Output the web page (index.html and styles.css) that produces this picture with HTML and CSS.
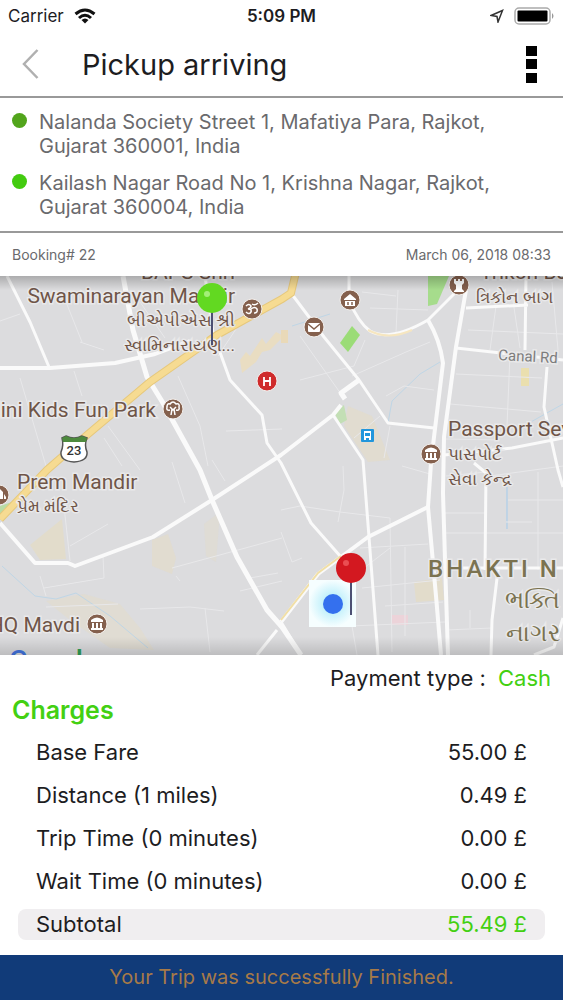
FILE: index.html
```html
<!DOCTYPE html>
<html lang="en">

<head>
    <meta charset="UTF-8">
    <meta name="viewport" content="width=device-width, initial-scale=1.0">
    <title>Pickup arriving</title>
    <link rel="stylesheet" href="styles.css">
</head>

<body>
    <div class="status-bar">
        <div class="status-left">
            <span>Carrier</span>
            <svg width="22" height="16" viewBox="0 0 22 16" aria-hidden="true">
                <g fill="none" stroke="#111" stroke-width="3">
                    <path d="M1.5 6 Q11 -2 20.5 6" />
                    <path d="M5 10 Q11 4.500 17 10" />
                </g>
                <path d="M7.500 12 Q11 9 14.500 12 L11 15.500 Z" fill="#111" />
            </svg>
        </div>
        <span class="status-time">5:09 PM</span>
        <div class="status-right">
            <svg width="14" height="14" viewBox="0 0 14 14" aria-hidden="true">
                <path d="M1 6.500 L12.500 1.500 L8 13 L7 7.500 Z" fill="none" stroke="#333" stroke-width="1.500" />
            </svg>
            <svg width="41" height="18" viewBox="0 0 41 18" aria-hidden="true">
                <rect x="1" y="1" width="35" height="16" rx="4" fill="#fff" stroke="#aaa" stroke-width="1.500" />
                <rect x="3.500" y="3.500" width="30" height="11" rx="1" fill="#000" />
                <path d="M38 6 Q41 9 38 12 Z" fill="#999" />
            </svg>
        </div>
    </div>

    <header class="header">
        <button class="icon-btn" type="button" aria-label="Back">
            <svg width="18" height="32" viewBox="0 0 18 32">
                <path d="M15.500 2 L2 16 L15.500 30" fill="none" stroke="#b0b0b0" stroke-width="2.500" />
            </svg>
        </button>
        <h1 class="title">Pickup arriving</h1>
        <button class="icon-btn" type="button" aria-label="Menu">
            <svg width="11" height="38" viewBox="0 0 11 38">
                <rect width="11" height="10" y="1" />
                <rect width="11" height="10" y="14" />
                <rect width="11" height="10" y="28" />
            </svg>
        </button>
    </header>

    <ul class="addresses">
        <li class="address from">Nalanda Society Street 1, Mafatiya Para, Rajkot, Gujarat 360001, India</li>
        <li class="address to">Kailash Nagar Road No 1, Krishna Nagar, Rajkot, Gujarat 360004, India</li>
    </ul>

    <div class="booking">
        <span>Booking# 22</span>
        <span>March 06, 2018 08:33</span>
    </div>

    <div class="map">
        <svg class="map-canvas" viewBox="0 0 563 379" preserveAspectRatio="xMidYMid slice" role="img" aria-label="Map of the trip">
            <defs>
                <linearGradient id="shadeTop" x1="0" y1="0" x2="0" y2="1">
                    <stop offset="0" stop-color="#000" stop-opacity=".22" />
                    <stop offset="1" stop-color="#000" stop-opacity="0" />
                </linearGradient>
                <linearGradient id="shadeBottom" x1="0" y1="1" x2="0" y2="0">
                    <stop offset="0" stop-color="#000" stop-opacity=".14" />
                    <stop offset="1" stop-color="#000" stop-opacity="0" />
                </linearGradient>
                <radialGradient id="glow">
                    <stop offset="0.400" stop-color="#c4f1fb" />
                    <stop offset="1" stop-color="#f6feff" />
                </radialGradient>
            </defs>
            <rect width="563" height="379" fill="#dcdcde" />

            <!-- built-up areas -->
            <g fill="#e2dccb">
                <path d="M30 269 L62 243 L66 283 L40 284 Z" />
                <path d="M152 264 L168 258 L176 282 L172 298 L152 290 Z" opacity=".7" />
                <path d="M46 325 L84 318 L120 328 L140 352 L154 374 L110 372 L70 344 Z" opacity=".6" />
                <path d="M204 248 L220 236 L216 286 L206 280 Z" opacity=".5" />
                <path d="M348 130 L372 140 L390 184 L368 186 L344 150 Z" opacity=".7" />
                <path d="M414 306 L442 302 L444 324 L416 326 Z" />
                <path d="M521 92 h8 v18 h-8 Z" fill="#eadfae" />
                <path d="M240 84 L246 76 L250 80 L262 62 L266 68 L276 56 L284 60 L270 74 L262 76 L256 86 L242 97 Z" fill="#e9ddc2" />
                <path d="M281 54 h7 v13 h-7 Z" fill="#e9d9b8" />
            </g>
            <path d="M428 0 H449 L437 28 L428 30 Z" fill="#a6dc8c" />
            <path d="M352 50 L360 59 L348 76 L340 67 Z" fill="#9bdc77" />
            <path d="M334 136 L344 129 L347 144 L340 148 Z" fill="#c3dfb5" />
            <path d="M0 230 L18 224 L8 237 L0 238 Z" fill="#b9dca5" />
            <path d="M391 339 L408 339 L408 349 L391 349 Z" fill="#ecd3d9" />

            <!-- water -->
            <g fill="none" stroke="#bfd6e6" stroke-width="1">
                <path d="M388 147 L392 125 L420 98 L440 86" />
                <path d="M520 152 L563 128" />
                <path d="M507 211 V253" stroke="#a3cbec" />
                <path d="M2 290 L35 320 L56 323 L76 317 L110 340 L148 372" />
                <path d="M292 50 L330 38" />
            </g>

            <!-- side streets -->
            <g fill="none" stroke="#e8e8ea" stroke-width="1">
                <path d="M62 16 L82 66 M0 45 L20 38 M80 66 L104 74 M74 95 L82 120 M20 102 L46 190 M104 162 L122 190 M108 150 L140 194 M178 100 L200 150 L208 190" />
                <path d="M140 26 L165 62 M238 50 L218 80 M226 155 L282 153 M212 184 L225 205 M172 186 L185 227 M80 14 L110 28 M64 230 L70 285 M70 270 L108 248" />
                <path d="M40 300 L46 320 M44 312 L104 302 L103 280 M140 333 L190 331 L224 335 M205 332 L210 376 M172 292 L282 262 M176 300 L180 305 M240 315 L282 305 M250 302 L278 297 M46 331 L118 328" />
                <path d="M398 14 L396 56 M300 60 L341 118 M300 104 L354 90 L365 64 M352 100 L406 76 L430 66 M386 120 L404 110 L434 114 M380 140 L354 162 M362 16 L396 20 M370 32 L428 34" />
                <path d="M468 54 L563 58 M496 30 L490 74 M512 18 L520 72 M552 6 L558 74 M510 78 L507 150 M450 128 L541 136 M456 98 L542 102 M446 163 L500 164 M390 150 L384 182" />
                <path d="M343 190 L344 214 L338 246 M281 234 L300 230 L340 236 L390 242 L392 376 M405 271 V360 M360 272 L428 268 M362 312 L440 304 M385 330 L443 326 M350 350 L445 346" />
                <path d="M445 237 H485 M446 257 H563 M506 246 H532 M508 224 H563 M538 196 V294 M446 354 L492 352 M470 334 V352 M352 350 L357 379 M364 292 L390 272" />
                <path d="M281 256 L292 286 L302 282 M402 190 L430 198 M446 200 L486 196 M490 200 L563 190" />
            </g>

            <!-- main streets -->
            <g fill="none" stroke="#fafafa" stroke-width="3" stroke-linejoin="round">
                <path d="M0 92 L50 92 L115 87 L155 78 L190 65" stroke-width="4" />
                <path d="M7 0 L30 46 L49 91" />
                <path d="M123 0 L133 54 L147 101 L163 127 L200 194 L212 224 L237 281 L267 334 L282 351 L301 379" stroke-width="5" />
                <path d="M277 354 L257 379" />
                <path d="M205 0 L213 57 L230 104 L262 139 L267 167 L281 187 L311 247 L341 281" />
                <path d="M0 247 L35 287 L68 287 L75 290 L153 261 L212 224 L281 179 L333 139 L341 129" stroke-width="4" />
                <path d="M333 139 L363 184 L369 261 L378 379" />
                <path d="M291 17 L324 61 L359 104 L388 147 L434 152" />
                <path d="M359 104 L341 117 L345 123" stroke-width="5" />
                <path d="M349 0 L349 24 Q358 46 370 55 Q390 66 428 44 L458 14" />
                <path d="M428 44 Q440 64 443 87 L434 161 L431 187 L428 231 L436 320 L441 379" stroke-width="4" />
                <path d="M466 14 L456 71 L444 161 L443 217 L446 317 L448 379" stroke-width="4" />
                <path d="M466 32 L528 29 M526 0 L525 74 M456 72 L563 84 M547 91 L544 131 L558 194 L563 211 M444 179 L512 172 L563 162" />
                <path d="M474 187 L486 197 L485 294 M448 292 H563 M498 294 L492 344 L491 379 M534 379 L554 371 L563 342" />
                <path d="M281 346 L318 298 L341 281 L368 261 L428 231" stroke-width="4" />
                <path d="M281 346 L295 369 L301 379" />
            </g>
            <path d="M281 344 L318 297 L341 280" fill="none" stroke="#f1dfa6" stroke-width="2" />
            <path d="M368 54 Q388 65 412 54" fill="none" stroke="#f6e6c0" stroke-width="2" />
            <path d="M296 -4 L291 17 L282 23 L217 59 L150 106 L87 159 L47 194 L0 243" fill="none" stroke="#e6c87c" stroke-width="8" />
            <path d="M296 -4 L291 17 L282 23 L217 59 L150 106 L87 159 L47 194 L0 243" fill="none" stroke="#f6db92" stroke-width="6" />

            <!-- route number -->
            <path d="M62 162 L66 160 Q74 164 82 160 L87 162 Q84 169 87 176 Q88 185 74 186 Q60 185 61 176 Q64 169 62 162 Z" fill="#fff" stroke="#555" stroke-width="1.500" />
            <path d="M62 162 L66 160 Q74 164 82 160 L87 162 L86 166 H63 Z" fill="#4d8a3d" />
            <text class="route" x="74" y="179" text-anchor="middle">23</text>

            <!-- places -->
            <g class="place">
                <text x="235" y="3" text-anchor="end">BAPS Shri</text>
                <text x="235" y="27" text-anchor="end">Swaminarayan Mandir</text>
                <text class="local" x="235" y="50" text-anchor="end">બીએપીએસ શ્રી</text>
                <text class="local" x="235" y="75" text-anchor="end">સ્વામિનારાયણ...</text>
                <text x="156" y="141" text-anchor="end">Mini Kids Fun Park</text>
                <text x="17" y="213">Prem Mandir</text>
                <text class="local" x="17" y="236">પ્રેમ મંદિર</text>
                <text x="80" y="356" text-anchor="end">HQ Mavdi</text>
                <text x="480" y="3">Trikon Baug</text>
                <text class="local" x="476" y="27">ત્રિકોન બાગ</text>
                <text x="448" y="160">Passport Seva</text>
                <text class="local" x="448" y="184">પાસપોર્ટ</text>
                <text class="local" x="448" y="209">સેવા કેન્દ્ર</text>
            </g>
            <text class="street" x="498" y="84" transform="rotate(3 498 84)">Canal Rd</text>
            <g class="district">
                <text x="428" y="301">BHAKTI N</text>
                <text class="local" x="560" y="332" text-anchor="end">ભક્તિ</text>
                <text class="local" x="560" y="365" text-anchor="end">નાગર</text>
            </g>
            <text class="logo" x="9" y="394"><tspan fill="#4374e0">G</tspan><tspan fill="#d8483b">o</tspan><tspan fill="#e8b320">o</tspan><tspan fill="#4374e0">g</tspan><tspan fill="#2f9e55">l</tspan><tspan fill="#d8483b">e</tspan></text>

            <!-- place icons -->
            <g fill="#84604d" stroke="#f3efec" stroke-width="1">
                <circle cx="252" cy="33" r="10" />
                <circle cx="173" cy="133" r="10" />
                <circle cx="97" cy="348" r="10" />
                <circle cx="-1" cy="219" r="10" />
                <circle cx="350" cy="24" r="10" />
                <circle cx="314" cy="51" r="10" />
                <circle cx="459" cy="9" r="10" />
                <circle cx="431" cy="178" r="10" />
                <circle cx="267" cy="105" r="10" fill="#cf2b2b" />
            </g>
            <g fill="none" stroke="#fff" stroke-width="1.500">
                <path d="M246 30 Q249 27 251 30 Q251 32 248 33 Q252 33 251 36 Q249 39 246 36 M251 33 Q255 30 257 33 Q258 37 254 37 M252 28 Q255 30 258 27" />
                <path d="M171 139 L172 133 M175 139 L174 133 M170 134 Q166 135 167 131 Q167 127 170 128 Q173 124 176 128 Q180 127 179 131 Q180 135 176 134 M170 131 L173 134 L176 131" />
                <path d="M264 101 V110 M270 101 V110 M264 105 H270" stroke-width="1.800" />
            </g>
            <g id="bank" fill="#fff">
                <path d="M91 344 Q97 339 103 344 V346 H91 Z" />
                <path d="M92 347 h2 v5 h-2 Z M96 347 h2 v5 h-2 Z M100 347 h2 v5 h-2 Z M91 352 h12 v2 h-12 Z" />
            </g>
            <use href="#bank" x="334" y="-170" />
            <g fill="#fff">
                <path d="M344 23 L350 18 L356 23 V24 H344 Z M345 25 H355 V30 H345 Z" />
                <path d="M348 26 v3 M352 26 v3" stroke="#84604d" stroke-width="1.500" />
                <rect x="308" y="47" width="12" height="9" rx="1" />
                <path d="M308 48 L314 53 L320 48" fill="none" stroke="#84604d" stroke-width="1.500" />
                <path d="M454 3 h2 v2 h2 v-2 h2 v2 h2 v-2 h2 v4 l-2 2 v4 l2 2 v1 h-10 v-1 l2 -2 v-4 l-2 -2 Z" />
                <path d="M0 223 V213 L3 216 V223 Z M4 223 V218 L6 221 V223 Z" />
            </g>
            <rect x="361" y="153" width="13" height="13" rx="1" fill="#2196dc" />
            <path d="M364 155 H371 V164 H369 V162 H366 V164 H364 Z" fill="#fff" />
            <path d="M365 157 H370 V160 H365 Z" fill="#2196dc" />

            <rect width="563" height="14" fill="url(#shadeTop)" />
            <rect y="361" width="563" height="18" fill="url(#shadeBottom)" />

            <!-- current position -->
            <rect x="309" y="304" width="47" height="47" fill="url(#glow)" />
            <circle cx="333" cy="328" r="10" fill="#3470ee" />

            <!-- pickup and drop pins -->
            <path d="M212 36 V69 M351 306 V339" stroke="#4c5073" stroke-width="2" />
            <circle cx="212" cy="22" r="15" fill="#62d921" />
            <circle cx="207" cy="18" r="3" fill="#a3ef78" />
            <circle cx="351" cy="292" r="15" fill="#d31820" />
            <circle cx="346" cy="287" r="3" fill="#ea4e52" />
        </svg>
    </div>

    <main class="charges">
        <p class="payment">Payment type : <span class="payment-value">Cash</span></p>
        <h2 class="charges-title">Charges</h2>
        <table class="charges-table">
            <tr>
                <th scope="row">Base Fare</th>
                <td>55.00 £</td>
            </tr>
            <tr>
                <th scope="row">Distance (1 miles)</th>
                <td>0.49 £</td>
            </tr>
            <tr>
                <th scope="row">Trip Time (0 minutes)</th>
                <td>0.00 £</td>
            </tr>
            <tr>
                <th scope="row">Wait Time (0 minutes)</th>
                <td>0.00 £</td>
            </tr>
            <tr class="subtotal">
                <th scope="row">Subtotal</th>
                <td>55.49 £</td>
            </tr>
        </table>
    </main>

    <footer class="message">Your Trip was successfully Finished.</footer>
</body>

</html>
```

FILE: styles.css
```css
* {
    box-sizing: border-box;
}

body {
    margin: 0;
    min-height: 100vh;
    display: flex;
    flex-direction: column;
    background: #fff;
    color: #1d1d1f;
    font-family: Inter, "Liberation Sans", sans-serif;
}

/* status bar */
.status-bar {
    display: grid;
    grid-template-columns: 1fr auto 1fr;
    align-items: center;
    height: 32px;
    padding: 0 8px;
    font-size: 17px;
}

.status-left,
.status-right {
    display: flex;
    align-items: center;
    gap: 10px;
}

.status-right {
    justify-content: flex-end;
}

.status-time {
    font-weight: 600;
}

/* header */
.header {
    display: flex;
    align-items: center;
    height: 66px;
    padding: 0 20px 0 16px;
    border-bottom: 2px solid #999;
}

.icon-btn {
    display: flex;
    padding: 0 6px;
    border: 0;
    background: none;
}

.title {
    flex: 1;
    margin: 0 0 0 36px;
    font-size: 29px;
    font-weight: 400;
}

/* pickup and drop addresses */
.addresses {
    margin: 0;
    padding: 12px 40px 12px 12px;
    list-style: none;
    border-bottom: 2px solid #999;
}

.address {
    display: flex;
    gap: 12px;
    color: #6a6a6d;
    font-size: 20px;
    line-height: 24px;
}

.address + .address {
    margin-top: 13px;
}

.address::before {
    content: "";
    flex: none;
    width: 15px;
    height: 15px;
    margin-top: 3px;
    border-radius: 50%;
}

.from::before {
    background: #52a51c;
}

.to::before {
    background: #43cb10;
}

.booking {
    display: flex;
    justify-content: space-between;
    padding: 0 12px;
    color: #6a6a6d;
    font-size: 14px;
    line-height: 43px;
}

/* map */
.map {
    flex: 1 0 320px;
    position: relative;
    overflow: hidden;
}

.map-canvas {
    position: absolute;
    width: 100%;
    height: 100%;
}

.map text {
    font-family: Roboto, "Noto Sans", sans-serif;
}

.place text {
    fill: #6f5548;
    font-size: 21px;
    stroke: #e9e9ea;
    stroke-width: 3px;
    paint-order: stroke;
}

.place .local {
    font-size: 17px;
}

.map .street {
    fill: #7d7d7d;
    font-size: 15px;
    stroke: #e9e9ea;
    stroke-width: 3px;
    paint-order: stroke;
}

.district text {
    fill: #7b7350;
    font-size: 24px;
    font-weight: 500;
    letter-spacing: 3px;
    stroke: #e9e9ea;
    stroke-width: 3px;
    paint-order: stroke;
}

.district .local {
    font-weight: 400;
    letter-spacing: 0;
}

.map .route {
    fill: #333;
    font-size: 13px;
    font-weight: 500;
}

.map .logo {
    font-size: 28px;
    font-weight: 500;
}

/* charges */
.charges {
    padding: 9px 12px 3px;
}

.payment {
    margin: 0;
    font-size: 22px;
    line-height: 28px;
    text-align: right;
}

.payment-value {
    margin-left: 6px;
    color: #43d012;
}

.charges-title {
    margin: 3px 0 0;
    color: #43d012;
    font-size: 25px;
    font-weight: 600;
    line-height: 30px;
}

.charges-table {
    width: 100%;
    padding: 0 6px;
    border-spacing: 0 12px;
    font-size: 22px;
    line-height: 31px;
}

.charges-table th,
.charges-table td {
    padding: 0 18px;
    font-weight: 400;
}

.charges-table th {
    text-align: left;
}

.charges-table td {
    text-align: right;
}

.subtotal th,
.subtotal td {
    background: #f0eef0;
}

.subtotal th {
    border-radius: 8px 0 0 8px;
}

.subtotal td {
    border-radius: 0 8px 8px 0;
    color: #43d012;
}

.message {
    background: #113b79;
    color: #a77a48;
    font-size: 20px;
    line-height: 45px;
    text-align: center;
}
```
